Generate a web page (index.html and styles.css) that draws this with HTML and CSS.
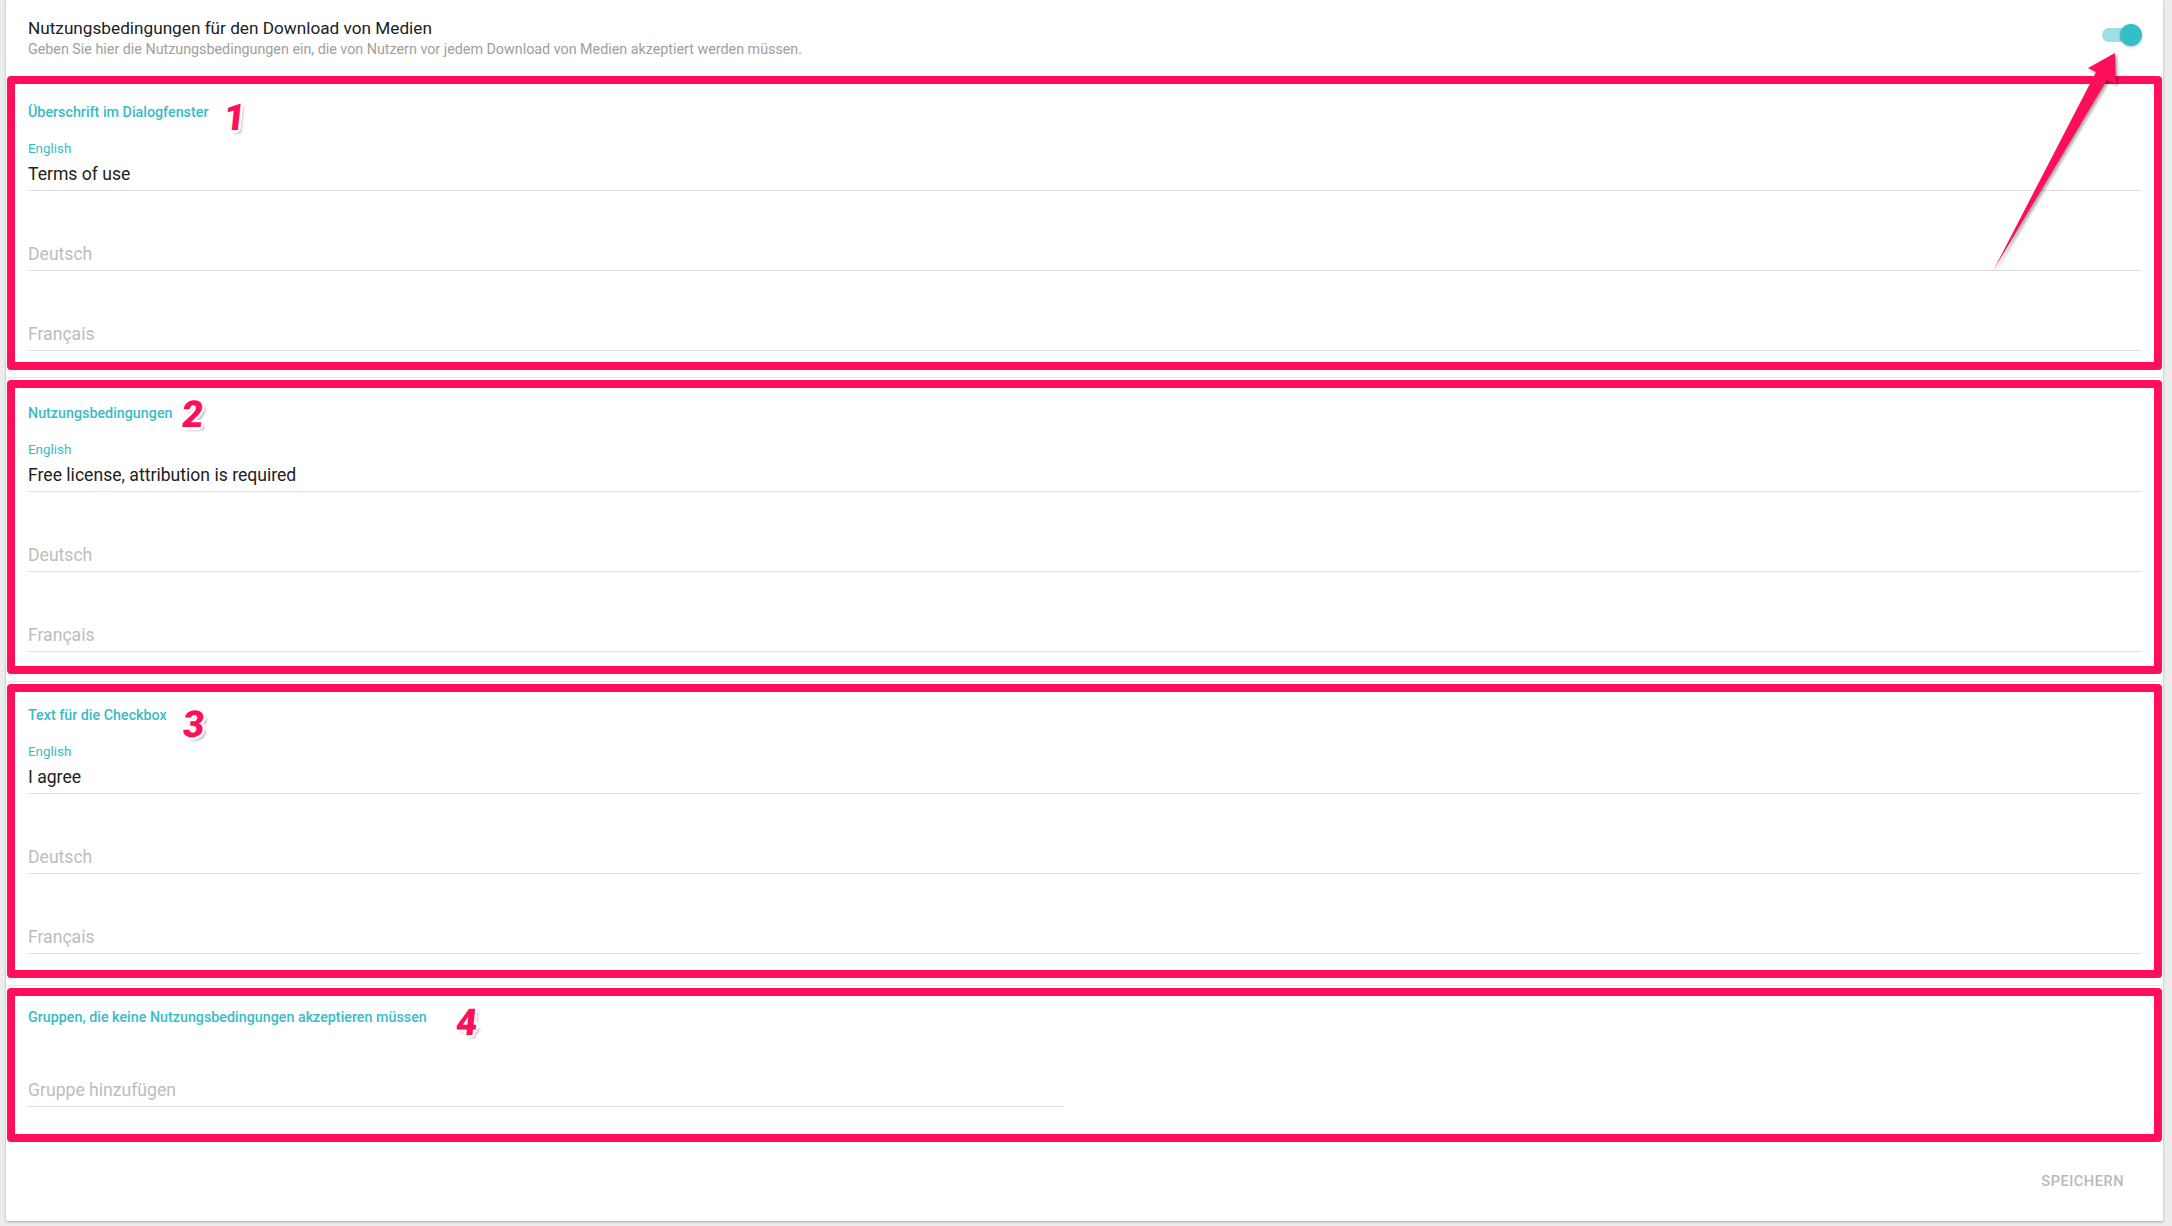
FILE: index.html
```html
<!DOCTYPE html>
<html lang="de">
<head>
<meta charset="utf-8">
<title>Nutzungsbedingungen</title>
<link rel="stylesheet" href="styles.css">
</head>
<body>
<main class="card">
  <header class="card-header">
    <div class="header-text">
      <h2 class="card-title">Nutzungsbedingungen für den Download von Medien</h2>
      <p class="card-subtitle">Geben Sie hier die Nutzungsbedingungen ein, die von Nutzern vor jedem Download von Medien akzeptiert werden müssen.</p>
    </div>
    <div class="switch" role="switch" aria-checked="true">
      <span class="switch-track"></span>
      <span class="switch-thumb"></span>
    </div>
  </header>

  <section class="box box-1">
    <div class="box-head">
      <h3 class="section-title">Überschrift im Dialogfenster</h3>
      <span class="mark mark-1">1</span>
    </div>
    <div class="fields">
      <div class="field"><span class="field-label">English</span><div class="field-input">Terms of use</div></div>
      <div class="field"><span class="field-label"></span><div class="field-input is-empty">Deutsch</div></div>
      <div class="field"><span class="field-label"></span><div class="field-input is-empty">Français</div></div>
    </div>
  </section>
  <hr class="divider">

  <section class="box box-2">
    <div class="box-head">
      <h3 class="section-title">Nutzungsbedingungen</h3>
      <span class="mark mark-2">2</span>
    </div>
    <div class="fields">
      <div class="field"><span class="field-label">English</span><div class="field-input">Free license, attribution is required</div></div>
      <div class="field"><span class="field-label"></span><div class="field-input is-empty">Deutsch</div></div>
      <div class="field"><span class="field-label"></span><div class="field-input is-empty">Français</div></div>
    </div>
  </section>
  <hr class="divider">

  <section class="box box-3">
    <div class="box-head">
      <h3 class="section-title">Text für die Checkbox</h3>
      <span class="mark mark-3">3</span>
    </div>
    <div class="fields">
      <div class="field"><span class="field-label">English</span><div class="field-input">I agree</div></div>
      <div class="field"><span class="field-label"></span><div class="field-input is-empty">Deutsch</div></div>
      <div class="field"><span class="field-label"></span><div class="field-input is-empty">Français</div></div>
    </div>
  </section>
  <hr class="divider">

  <section class="box box-4">
    <div class="box-head">
      <h3 class="section-title">Gruppen, die keine Nutzungsbedingungen akzeptieren müssen</h3>
      <span class="mark mark-4">4</span>
    </div>
    <div class="chip-input">
      <div class="field-input is-empty">Gruppe hinzufügen</div>
    </div>
  </section>

  <footer class="card-footer">
    <button class="flat-button" type="button" disabled>Speichern</button>
  </footer>

  <svg class="arrow" width="200" height="300" viewBox="0 0 200 300" aria-hidden="true">
    <polygon points="152,53 125,68 133,72 30,271 144,80 153,84" fill="#ff0f5a"/>
  </svg>
</main>
</body>
</html>
```

FILE: styles.css
```css
* { box-sizing: border-box; }

html, body {
  margin: 0;
  padding: 0;
}

body {
  background: #ececec;
  padding: 0 9px 0 6px;
  font-family: "Roboto", "Liberation Sans", sans-serif;
  color: #212121;
  height: 1226px;
  overflow: hidden;
}

.card {
  position: relative;
  background: #ffffff;
  box-shadow: 0 1px 3px rgba(0,0,0,0.18), 0 1px 2px rgba(0,0,0,0.12);
  border-radius: 0 0 2px 2px;
  padding-top: 18px;
}

/* Header */
.card-header {
  display: flex;
  justify-content: space-between;
  align-items: flex-start;
  padding: 0 21px 0 22px;
}

.card-title {
  margin: 0;
  font-size: 17.2px;
  line-height: 20px;
  font-weight: 400;
  color: #212121;
}

.card-subtitle {
  margin: 3px 0 0;
  font-size: 14.3px;
  line-height: 16px;
  color: #9e9e9e;
}

.switch {
  position: relative;
  width: 40px;
  height: 22px;
  margin-top: 6px;
  flex: none;
}

.switch-track {
  position: absolute;
  left: 0;
  top: 4px;
  width: 34px;
  height: 14px;
  border-radius: 7px;
  background: #9fdfe4;
}

.switch-thumb {
  position: absolute;
  right: 0;
  top: 0;
  width: 22px;
  height: 22px;
  border-radius: 50%;
  background: #33bec8;
  box-shadow: 0 1px 3px rgba(0,0,0,0.25);
}

/* Annotated sections */
.box {
  margin: 0 1px;
  border: 8px solid #ff0f5a;
  border-radius: 4px;
  padding: 19px 12px 12px 13px;
  height: 294px;
}

.box-1 { margin-top: 19px; padding-top: 20px; }
.box-2 { padding-top: 17px; }
.box-3 { padding-top: 15px; }
.box-4 { height: 154px; padding-top: 13px; }

.divider {
  margin: 7px 0 2px;
  border: 0;
  border-top: 1px solid #e4e4e4;
  height: 0;
}

.box-head {
  display: flex;
  align-items: flex-start;
  height: 16px;
}

.section-title {
  margin: 0;
  font-size: 14.3px;
  line-height: 16px;
  font-weight: 500;
  color: #38bcc6;
  white-space: nowrap;
}

.mark {
  display: inline-block;
  font-family: "Roboto", "Liberation Sans", sans-serif;
  font-size: 37px;
  line-height: 30px;
  font-weight: 900;
  font-style: normal;
  color: #ff0f5a;
  transform: skewX(-6deg);
  text-shadow:
    2.5px 0 0 #fff, -2.5px 0 0 #fff, 0 2.5px 0 #fff, 0 -2.5px 0 #fff,
    1.8px 1.8px 0 #fff, -1.8px 1.8px 0 #fff, 1.8px -1.8px 0 #fff, -1.8px -1.8px 0 #fff,
    3px 3px 3px rgba(0,0,0,0.35);
}

.mark-1 { margin-left: 16px; margin-top: -1px; }
.mark-2 { margin-left: 9px; margin-top: -5px; }
.mark-3 { margin-left: 16px; margin-top: 3px; }
.mark-4 { margin-left: 29px; margin-top: -1px; }

/* Fields */
.fields {
  display: flex;
  flex-direction: column;
  gap: 9px;
}

.field {
  padding-top: 21px;
  display: flex;
  flex-direction: column;
}

.field-label {
  display: block;
  height: 16px;
  font-size: 13.4px;
  line-height: 16px;
  color: #38bcc6;
}

.field-input {
  font-size: 17.6px;
  line-height: 24px;
  padding: 5px 0 4px;
  border-bottom: 1px solid #e0e0e0;
  color: #212121;
  white-space: nowrap;
}

.field-input.is-empty {
  color: #bdbdbd;
}

.chip-input {
  width: 49%;
  margin-top: 48px;
}

/* Footer */
.card-footer {
  display: flex;
  justify-content: flex-end;
  padding: 21px 23px 22px 0;
}

.flat-button {
  height: 36px;
  padding: 0 16px;
  border: 0;
  background: transparent;
  font-family: "Roboto", "Liberation Sans", sans-serif;
  font-size: 14.6px;
  font-weight: 500;
  letter-spacing: 0.5px;
  text-transform: uppercase;
  color: #b9b9b9;
}

/* Annotation arrow overlay */
.arrow {
  position: absolute;
  top: 0;
  right: 0;
  filter: drop-shadow(2px 2px 1.5px rgba(0,0,0,0.35));
  pointer-events: none;
}
```
